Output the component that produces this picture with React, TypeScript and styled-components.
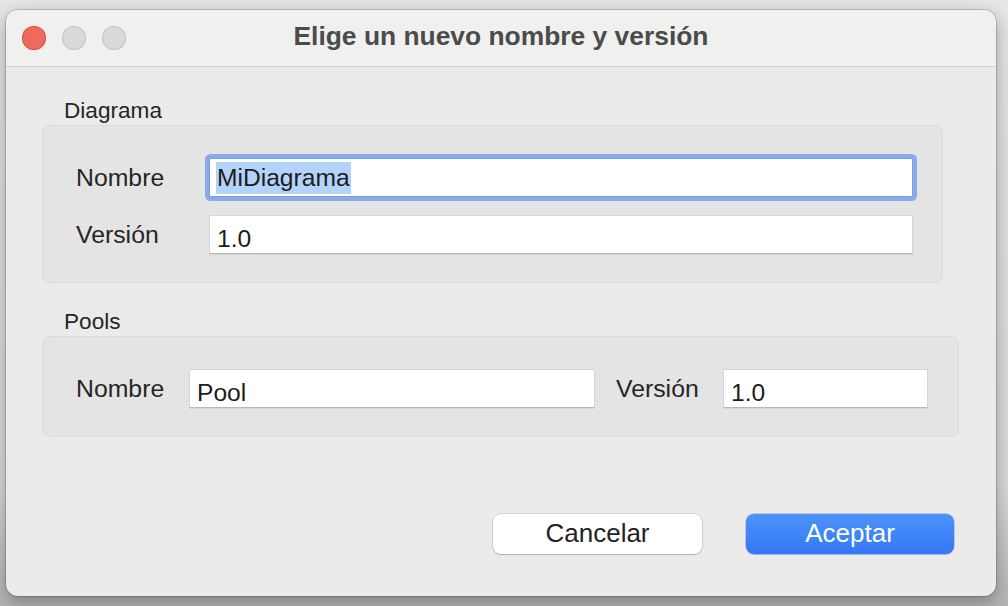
import React from "react";
import styled, { createGlobalStyle } from "styled-components";

const GlobalStyle = createGlobalStyle`
  html, body {
    margin: 0;
    padding: 0;
    background: #e3e3e3;
    font-family: "Liberation Sans", Arial, sans-serif;
  }
  * { box-sizing: border-box; }
`;

const Page = styled.div`
  width: 1008px;
  height: 606px;
  padding: 10px 0 0 6px;
  background: linear-gradient(180deg, #e6e6e6 0%, #dadada 80%, #b4b4b4 100%);
  overflow: hidden;
`;

const Window = styled.div`
  width: 990px;
  height: 586px;
  display: flex;
  flex-direction: column;
  border-radius: 12px;
  overflow: hidden;
  background: #ebebeb;
  box-shadow: 0 0 0 1px rgba(0, 0, 0, 0.16), 0 6px 18px rgba(0, 0, 0, 0.32);
`;

const TitleBar = styled.div`
  height: 57px;
  flex: none;
  display: grid;
  grid-template-columns: 1fr auto 1fr;
  align-items: center;
  padding: 0 16px;
  background: #f0f0ef;
  border-bottom: 1px solid #d2d2d2;
`;

const Lights = styled.div`
  display: flex;
  gap: 16px;
  align-items: center;
  margin-top: -1px;
`;

const Light = styled.span<{ $color: string; $edge: string }>`
  width: 24px;
  height: 24px;
  border-radius: 50%;
  background: ${(p) => p.$color};
  box-shadow: inset 0 0 0 1px ${(p) => p.$edge};
`;

const Title = styled.div`
  font-size: 26.4px;
  font-weight: 700;
  color: #4b4b4b;
  margin-top: -3px;
`;

const Body = styled.div`
  flex: 1;
  display: flex;
  flex-direction: column;
  padding: 31px 37px 42px 36px;
`;

const SectionTitle = styled.div<{ $gap?: number }>`
  font-size: 22.6px;
  line-height: 26px;
  color: #262626;
  padding-left: 22px;
  margin-top: ${(p) => p.$gap ?? 0}px;
  margin-bottom: 1px;
`;

const GroupBox = styled.div<{ $inset?: number; $padRight: number }>`
  margin-right: ${(p) => p.$inset ?? 0}px;
  background: #e4e4e4;
  border: 1px solid #dbdbdb;
  border-radius: 8px;
  padding: 32px ${(p) => p.$padRight}px 28px 33px;
`;

const FormGrid = styled.div`
  display: grid;
  grid-template-columns: 133px 1fr;
  row-gap: 18px;
  align-items: center;
`;

const FormRow = styled.div`
  display: flex;
  align-items: center;
`;

const FieldLabel = styled.div<{ $width?: number; $indent?: number }>`
  font-size: 24.8px;
  color: #262626;
  flex: none;
  ${(p) => (p.$width ? `width: ${p.$width}px;` : "")}
  padding-left: ${(p) => p.$indent ?? 0}px;
  margin-top: 1px;
`;

const TextField = styled.div<{ $width?: number; $focused?: boolean }>`
  ${(p) => (p.$width ? `width: ${p.$width}px; flex: none;` : "")}
  height: 39px;
  background: #ffffff;
  font-size: 24.6px;
  line-height: 33px;
  color: #1c1c1c;
  padding: 6px 7px 0 7px;
  white-space: nowrap;
  overflow: visible;
  border: 1px solid #d6d6d6;
  border-bottom-color: #b9b9b9;
  box-shadow: 0 1px 0 rgba(0, 0, 0, 0.06);
  ${(p) =>
    p.$focused
      ? `
    border-color: #7a9ee4;
    border-radius: 2px;
    box-shadow: 0 0 0 4px #8caaea;
    padding-left: 8px;
  `
      : ""}
`;

const Selection = styled.span`
  display: inline-block;
  vertical-align: top;
  line-height: 32px;
  margin-top: -3px;
  margin-left: -2px;
  padding: 0 1px;
  background: #b4d3fb;
`;

const ButtonRow = styled.div`
  margin-top: auto;
  display: flex;
  justify-content: flex-end;
  gap: 44px;
  padding-right: 5px;
`;

const Button = styled.button<{ $primary?: boolean }>`
  width: ${(p) => (p.$primary ? 208 : 209)}px;
  height: 40px;
  border-radius: 8px;
  border: none;
  font-family: "Liberation Sans", Arial, sans-serif;
  font-size: 26px;
  padding: 0 0 1px 0;
  color: ${(p) => (p.$primary ? "#ffffff" : "#222222")};
  background: ${(p) =>
    p.$primary
      ? "linear-gradient(180deg, #4d92f7 0%, #3478f6 100%)"
      : "#ffffff"};
  box-shadow: ${(p) =>
    p.$primary
      ? "0 0 0 0.5px rgba(40, 100, 220, 0.5), 0 1px 1px rgba(0, 0, 0, 0.12)"
      : "0 0 0 0.5px rgba(0, 0, 0, 0.18), 0 1px 1.5px rgba(0, 0, 0, 0.18)"};
`;

export default function App() {
  return (
    <>
      <GlobalStyle />
      <Page>
        <Window>
          <TitleBar>
            <Lights>
              <Light $color="#ec6a5e" $edge="#d6574c" />
              <Light $color="#d9d9d9" $edge="#c4c4c4" />
              <Light $color="#d9d9d9" $edge="#c4c4c4" />
            </Lights>
            <Title>Elige un nuevo nombre y versión</Title>
            <div />
          </TitleBar>
          <Body>
            <SectionTitle>Diagrama</SectionTitle>
            <GroupBox $inset={16} $padRight={29}>
              <FormGrid>
                <FieldLabel>Nombre</FieldLabel>
                <TextField $focused>
                  <Selection>MiDiagrama</Selection>
                </TextField>
                <FieldLabel>Versión</FieldLabel>
                <TextField>1.0</TextField>
              </FormGrid>
            </GroupBox>

            <SectionTitle $gap={26}>Pools</SectionTitle>
            <GroupBox $padRight={30}>
              <FormRow>
                <FieldLabel $width={113}>Nombre</FieldLabel>
                <TextField $width={406}>Pool</TextField>
                <FieldLabel $width={128} $indent={21}>
                  Versión
                </FieldLabel>
                <TextField $width={205}>1.0</TextField>
              </FormRow>
            </GroupBox>

            <ButtonRow>
              <Button>Cancelar</Button>
              <Button $primary>Aceptar</Button>
            </ButtonRow>
          </Body>
        </Window>
      </Page>
    </>
  );
}
